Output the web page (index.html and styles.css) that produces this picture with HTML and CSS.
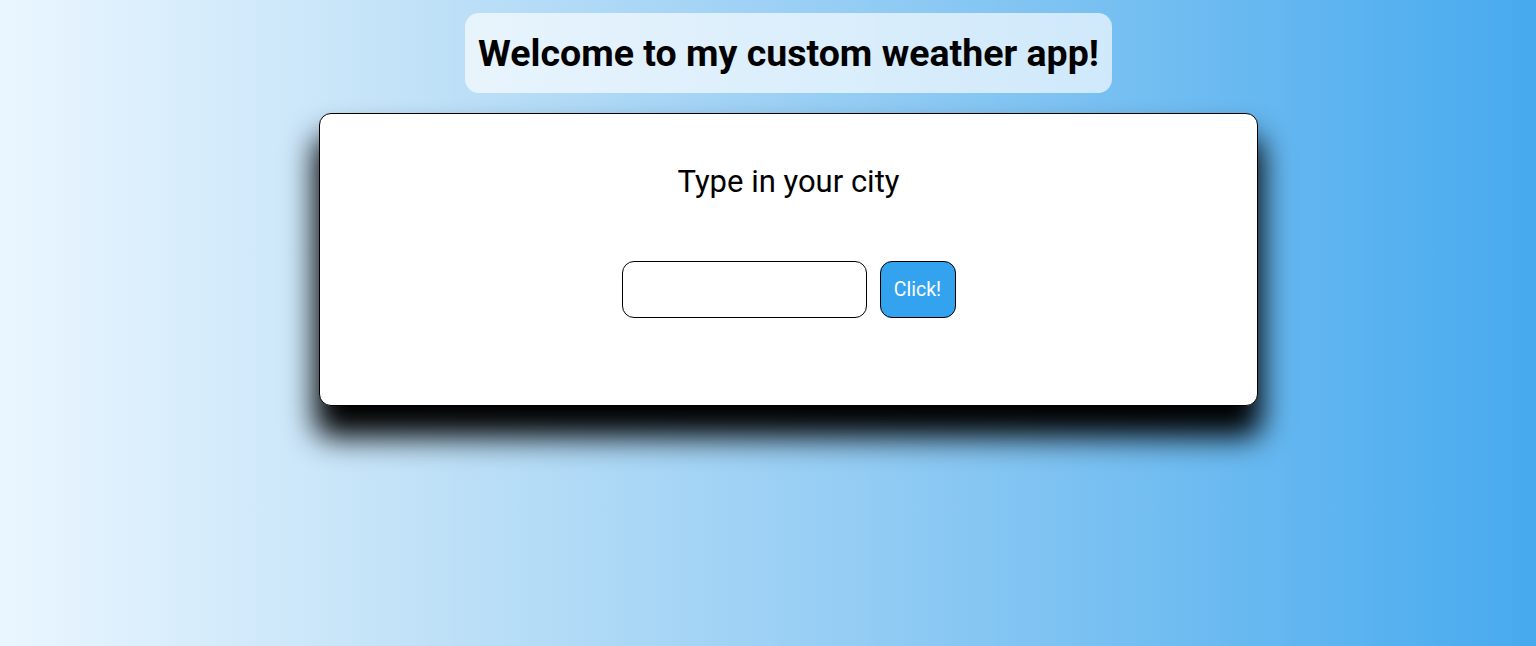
FILE: index.html
```html
<!DOCTYPE html>
<html lang="en">
<head>
<meta charset="utf-8">
<title>Weather app</title>
<link rel="stylesheet" href="styles.css">
</head>
<body>
<main class="page">
  <h1 class="title">Welcome to my custom weather app!</h1>
  <section class="card">
    <p class="prompt">Type in your city</p>
    <form class="search">
      <input class="city" type="text" aria-label="City">
      <button class="go" type="button">Click!</button>
    </form>
  </section>
</main>
</body>
</html>
```

FILE: styles.css
```css
html, body {
  margin: 0;
  height: 100%;
}
body {
  background: linear-gradient(to right, #eaf6ff 0%, #c4e3f8 25%, #95cdf4 55%, #47aaee 100%);
  font-family: Roboto, "Liberation Sans", sans-serif;
  color: #000;
}
.page {
  display: flex;
  flex-direction: column;
  align-items: center;
  padding: 13px 0 0 41px;
}
.title {
  margin: 0;
  padding: 0 13px;
  height: 80px;
  line-height: 80px;
  font-size: 37.5px;
  font-weight: 700;
  background: rgba(255, 255, 255, 0.65);
  border-radius: 14px;
}
.card {
  box-sizing: border-box;
  margin-top: 20px;
  width: 939px;
  height: 293px;
  background: #fff;
  border: 1px solid #000;
  border-radius: 12px;
  box-shadow: 0 27px 30px 4px #000;
  display: flex;
  flex-direction: column;
  align-items: center;
}
.prompt {
  margin: 48px 0 0;
  font-size: 31px;
  line-height: 40px;
}
.search {
  margin-top: 59px;
  display: flex;
  gap: 13px;
}
.city {
  box-sizing: border-box;
  width: 245px;
  height: 57px;
  border: 1px solid #000;
  border-radius: 12px;
  background: #fff;
  padding: 0 12px;
  font-size: 18px;
  font-family: inherit;
  outline: none;
}
.go {
  box-sizing: border-box;
  width: 76px;
  height: 57px;
  border: 1px solid #000;
  border-radius: 12px;
  background: #33a3ef;
  color: #fff;
  font-family: inherit;
  font-size: 19.5px;
  padding: 0;
}
```
